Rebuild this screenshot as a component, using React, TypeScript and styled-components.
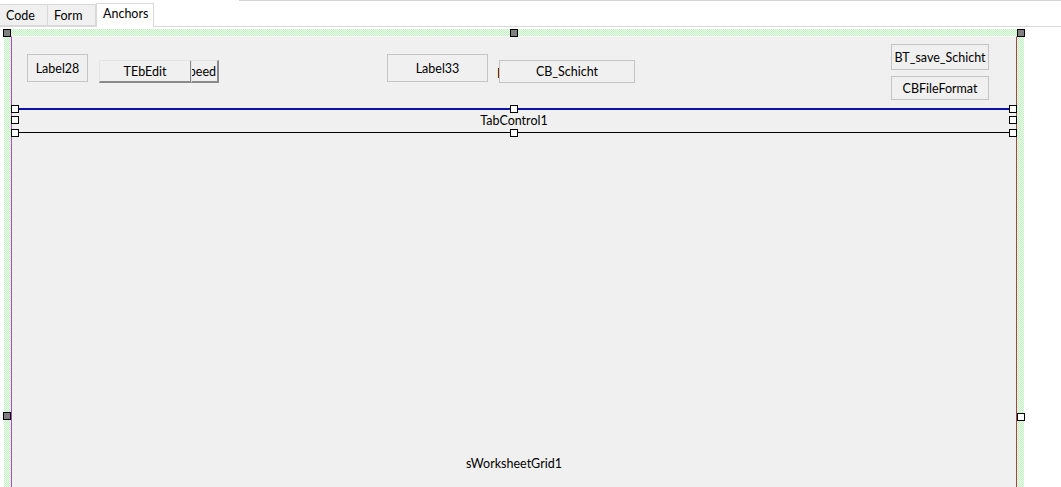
import React from "react";
import styled, { createGlobalStyle } from "styled-components";

const GlobalStyle = createGlobalStyle`
  html, body {
    margin: 0;
    padding: 0;
    background: #ffffff;
    font-family: "Segoe UI", Lato, "Noto Sans", sans-serif;
    font-size: 12.5px;
    color: #000;
    overflow: hidden;
  }
`;

const Page = styled.div`
  width: 1061px;
  height: 487px;
  display: flex;
  flex-direction: column;
  overflow: hidden;
`;

const TopStrip = styled.div`
  height: 2px;
  margin-left: 239px;
  border-top: 1px solid #d4d4d4;
`;

const TabBar = styled.div`
  display: flex;
  align-items: flex-end;
  height: 23px;
  border-bottom: 1px solid #d9d9d9;
`;

const Tab = styled.div<{ $active?: boolean }>`
  box-sizing: border-box;
  height: ${(p) => (p.$active ? 24 : 22)}px;
  width: ${(p) => (p.$active ? 58 : 48)}px;
  margin-bottom: ${(p) => (p.$active ? -1 : 0)}px;
  padding: ${(p) => (p.$active ? "3px 0 0 6px" : "4px 0 0 6px")};
  background: ${(p) => (p.$active ? "#ffffff" : "#f0f0f0")};
  border: 1px solid #d9d9d9;
  border-bottom: ${(p) => (p.$active ? "none" : "1px solid #d9d9d9")};
  border-left: ${(p) => (p.$active ? "1px solid #d9d9d9" : "none")};
  line-height: 14px;
`;

const Designer = styled.div`
  position: relative;
  flex: 1;
  padding: 2px 0 0 4px;
`;

const Frame = styled.div`
  box-sizing: border-box;
  width: 1020px;
  height: 100%;
  padding: 7px 7px 0 7px;
  background: repeating-conic-gradient(#c4f0c4 0 25%, #eafbea 0 50%) 0 0 / 2px 2px;
`;

const FormArea = styled.div`
  position: relative;
  box-sizing: border-box;
  height: 100%;
  background: #f0f0f0;
  border-left: 1px solid #b04cc0;
  border-right: 1px solid #a04848;
  border-top: 1px solid #f6f6f6;
`;

/* a control dropped on the form: its place on the canvas is its content */
const Control = styled.div<{ $x: number; $y: number; $w: number; $h: number; $raised?: boolean }>`
  position: absolute;
  box-sizing: border-box;
  left: ${(p) => p.$x}px;
  top: ${(p) => p.$y}px;
  width: ${(p) => p.$w}px;
  height: ${(p) => p.$h}px;
  display: flex;
  align-items: center;
  justify-content: center;
  background: #f0f0f0;
  border: 1px solid #c4c4c4;
  ${(p) =>
    p.$raised
      ? "border-color: #e4e4e4 #8a8a8a #8a8a8a #e4e4e4; border-width: 1px 2px 2px 1px;"
      : ""}
  white-space: nowrap;
  overflow: hidden;
  z-index: 2;
`;

const ClippedControl = styled(Control)`
  justify-content: flex-end;
  padding-right: 1px;
`;

const LooseLabel = styled.div<{ $x: number; $y: number }>`
  position: absolute;
  left: ${(p) => p.$x}px;
  top: ${(p) => p.$y}px;
  line-height: 14px;
  white-space: nowrap;
  z-index: 1;
`;

const TabControl = styled.div`
  position: absolute;
  left: 3px;
  right: 3px;
  top: 71px;
  height: 25px;
  box-sizing: border-box;
  border-top: 2px solid #0a14a8;
  border-bottom: 1px solid #000;
  display: flex;
  align-items: center;
  justify-content: center;
  padding-bottom: 2px;
`;

const Grid = styled.div`
  position: absolute;
  left: 0;
  right: 0;
  top: 96px;
  bottom: 0;
  display: flex;
  align-items: flex-end;
  justify-content: center;
  padding-bottom: 16px;
`;

const Handle = styled.div<{ $dark?: boolean }>`
  position: absolute;
  box-sizing: border-box;
  width: 8px;
  height: 8px;
  border: 1px solid #000;
  background: ${(p) => (p.$dark ? "#808080" : "#ffffff")};
  z-index: 5;
`;

const TopLeft = styled(Handle)`left: -4px; top: -5px;`;
const TopMid = styled(Handle)`left: calc(50% - 4px); top: -5px;`;
const TopRight = styled(Handle)`right: -4px; top: -5px;`;
const MidLeft = styled(Handle)`left: -4px; top: calc(50% - 5px);`;
const MidRight = styled(Handle)`right: -4px; top: calc(50% - 5px);`;
const BotLeft = styled(Handle)`left: -4px; bottom: -5px;`;
const BotMid = styled(Handle)`left: calc(50% - 4px); bottom: -5px;`;
const BotRight = styled(Handle)`right: -4px; bottom: -5px;`;

const FrameTL = styled(Handle)`left: 3px; top: 2px;`;
const FrameTM = styled(Handle)`left: 510px; top: 2px;`;
const FrameTR = styled(Handle)`left: 1017px; top: 2px;`;
const FrameML = styled(Handle)`left: 3px; top: 385px;`;
const FrameMR = styled(Handle)`left: 1017px; top: 386px;`;

export default function App() {
  return (
    <Page>
      <GlobalStyle />
      <TopStrip />
      <TabBar>
        <Tab>Code</Tab>
        <Tab>Form</Tab>
        <Tab $active>Anchors</Tab>
      </TabBar>
      <Designer>
        <Frame>
          <FormArea>
            <Control $x={15} $y={17} $w={61} $h={28}>Label28</Control>
            <Control $x={87} $y={23} $w={93} $h={23} $raised>TEbEdit</Control>
            <ClippedControl $x={179} $y={23} $w={28} $h={23} $raised>Speed</ClippedControl>
            <Control $x={375} $y={17} $w={101} $h={28}>Label33</Control>
            <LooseLabel $x={485} $y={30}>Farbe</LooseLabel>
            <Control $x={487} $y={23} $w={136} $h={23}>CB_Schicht</Control>
            <Control $x={879} $y={7} $w={98} $h={26}>BT_save_Schicht</Control>
            <Control $x={879} $y={39} $w={98} $h={24}>CBFileFormat</Control>

            <TabControl>
              TabControl1
              <TopLeft />
              <TopMid />
              <TopRight />
              <MidLeft />
              <MidRight />
              <BotLeft />
              <BotMid />
              <BotRight />
            </TabControl>

            <Grid>sWorksheetGrid1</Grid>
          </FormArea>
        </Frame>
        <FrameTL $dark />
        <FrameTM $dark />
        <FrameTR $dark />
        <FrameML $dark />
        <FrameMR />
      </Designer>
    </Page>
  );
}
